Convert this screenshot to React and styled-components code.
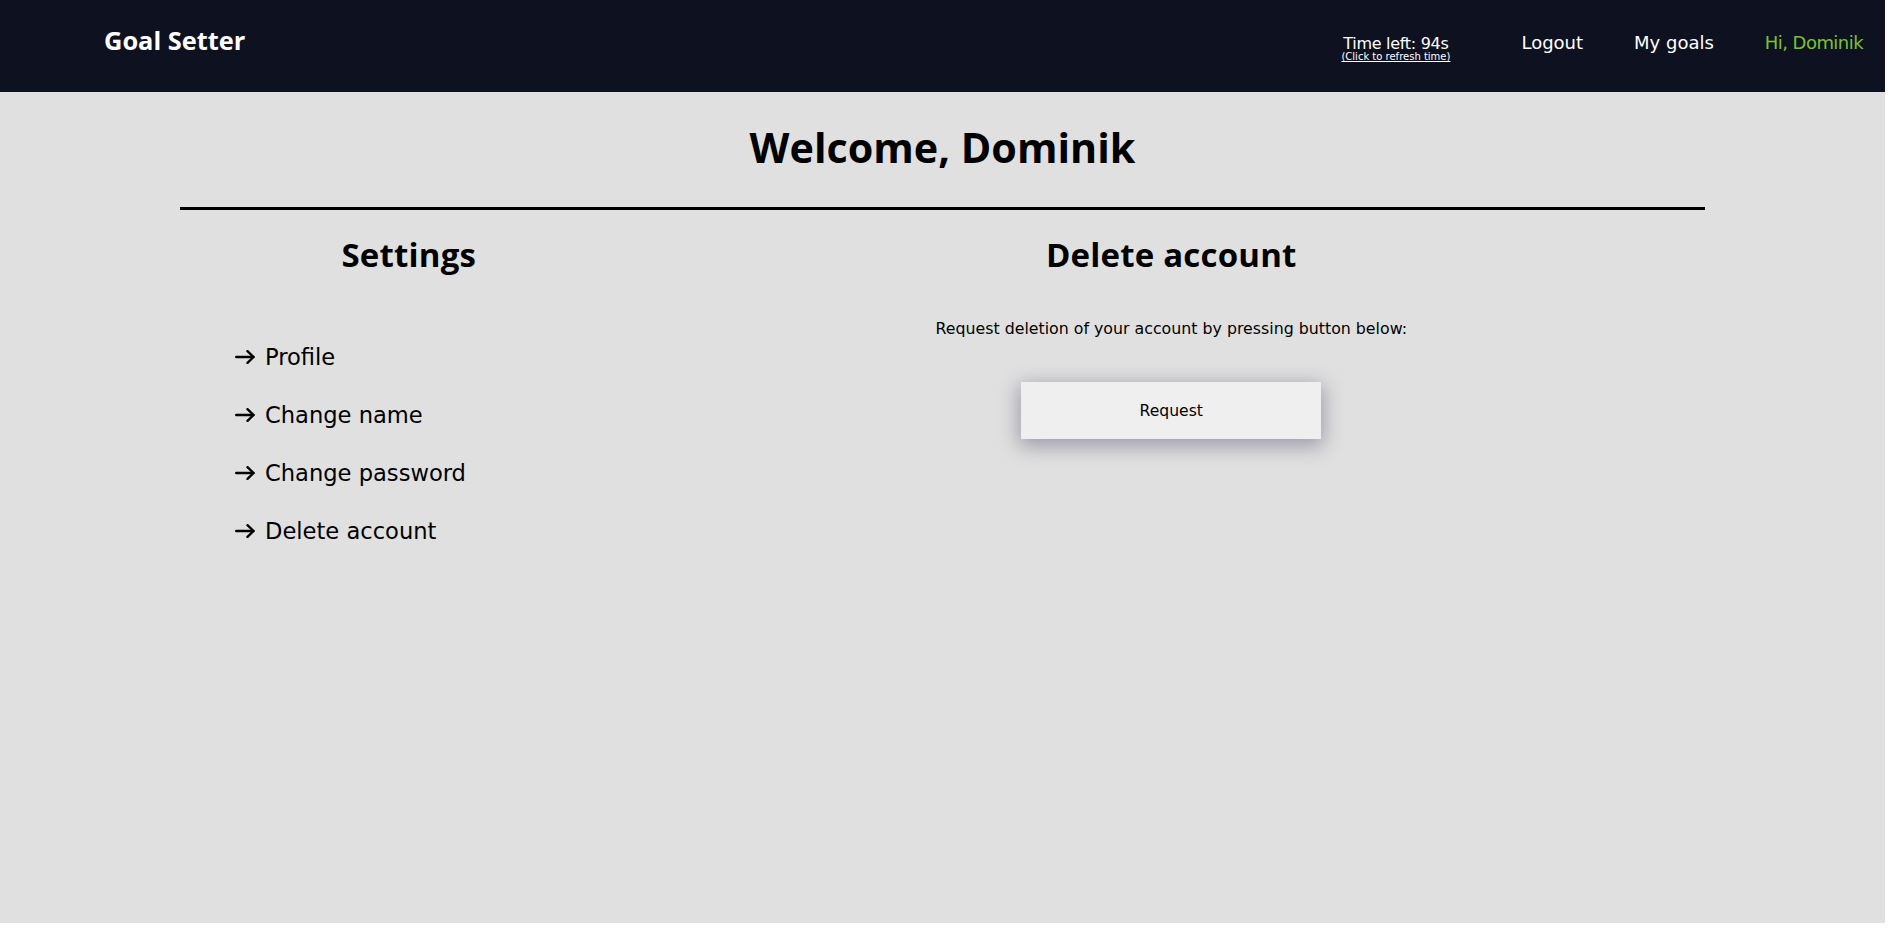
import styled, { createGlobalStyle } from "styled-components";

const GlobalStyle = createGlobalStyle`
  body {
    margin: 0;
    background-color: #ffffff;
    font-family: "DejaVu Sans", "Liberation Sans", sans-serif;
  }
`
const Page = styled.div`
  width: calc(100vw - 13px);
  min-height: calc(100vh - 11px);
  background-color: #e0e0e0;
  display: flex;
  flex-direction: column;
`
const Header = styled.header`
  height: 92px;
  box-sizing: border-box;
  padding: 25px 22px 0 104px;
  background-color: #0e1220;
  display: flex;
  justify-content: space-between;
  align-items: flex-start;
`
const Logo = styled.div`
  font-family: "Open Sans", sans-serif;
  font-weight: 700;
  font-size: 25.4px;
  line-height: 1.2;
  color: #ffffff;
`
const Nav = styled.nav`
  display: flex;
  align-items: flex-start;
  gap: 51px;
  margin-top: 7px;
`
const Timer = styled.div`
  display: flex;
  flex-direction: column;
  align-items: center;
  margin: 2px 20px 0 0;
  color: #ffffff;
  cursor: pointer;
`
const TimeLeft = styled.span`
  font-size: 16px;
  line-height: 1.2;
  letter-spacing: -0.3px;
`
const Refresh = styled.span`
  font-size: 10px;
  line-height: 10px;
  margin-top: -1px;
  text-decoration: underline;
`
const NavLink = styled.a`
  font-size: 18px;
  line-height: 1.2;
  color: ${(p) => (p.$green ? "#7ac231" : "#ffffff")};
  letter-spacing: ${(p) => (p.$green ? "-0.55px" : "0")};
  text-decoration: none;
  cursor: pointer;
`
const Main = styled.main`
  display: flex;
  flex-direction: column;
  padding: 0 180px;
  color: #000000;
`
const Title = styled.h1`
  margin: 31px 0 0;
  text-align: center;
  font-family: "Open Sans", sans-serif;
  font-weight: 700;
  font-size: 41.3px;
  line-height: 1.2;
`
const Divider = styled.hr`
  margin: 34px 0 0;
  border: none;
  height: 3px;
  background-color: #000000;
`
const Columns = styled.div`
  display: grid;
  grid-template-columns: 30% 70%;
  padding-top: 25px;
`
const Column = styled.section`
  display: flex;
  flex-direction: column;
  align-items: ${(p) => (p.$center ? "center" : "stretch")};
`
const Heading = styled.h2`
  margin: 0;
  text-align: center;
  font-family: "Open Sans", sans-serif;
  font-weight: 700;
  font-size: 33px;
  line-height: 1.2;
  letter-spacing: 0.2px;
`
const Menu = styled.ul`
  list-style: none;
  margin: 70px 0 0;
  padding: 0 0 0 55px;
  display: flex;
  flex-direction: column;
  gap: 32px;
`
const MenuItem = styled.li`
  display: flex;
  align-items: center;
  gap: 10px;
  font-size: 22.6px;
  line-height: 26px;
  cursor: pointer;
`
const Info = styled.p`
  margin: 44px 0 0;
  font-size: 15.8px;
  line-height: 22px;
`
const RequestButton = styled.button`
  margin-top: 42px;
  width: 300px;
  height: 57px;
  border: none;
  background-color: #efefef;
  box-shadow: 0px 5px 20px 2px rgba(52, 50, 80, 0.4);
  font-family: inherit;
  font-size: 15.6px;
  color: #000000;
  cursor: pointer;
`

const Arrow = () => (
    <svg width="20" height="14" viewBox="0 0 20 14" fill="none" stroke="#000" strokeWidth="2.4" strokeLinecap="round" strokeLinejoin="round">
        <path d="M1.2 7H18.5"/>
        <path d="M12.5 1.2L18.5 7L12.5 12.8"/>
    </svg>
)

const items = ["Profile", "Change name", "Change password", "Delete account"]

const App = () => {
    return (
        <Page>
            <GlobalStyle/>
            <Header>
                <Logo>Goal Setter</Logo>
                <Nav>
                    <Timer>
                        <TimeLeft>Time left: 94s</TimeLeft>
                        <Refresh>(Click to refresh time)</Refresh>
                    </Timer>
                    <NavLink>Logout</NavLink>
                    <NavLink>My goals</NavLink>
                    <NavLink $green>Hi, Dominik</NavLink>
                </Nav>
            </Header>
            <Main>
                <Title>Welcome, Dominik</Title>
                <Divider/>
                <Columns>
                    <Column>
                        <Heading>Settings</Heading>
                        <Menu>
                            {items.map((item) => (
                                <MenuItem key={item}><Arrow/>{item}</MenuItem>
                            ))}
                        </Menu>
                    </Column>
                    <Column $center>
                        <Heading>Delete account</Heading>
                        <Info>Request deletion of your account by pressing button below:</Info>
                        <RequestButton>Request</RequestButton>
                    </Column>
                </Columns>
            </Main>
        </Page>
    )
}

export default App
